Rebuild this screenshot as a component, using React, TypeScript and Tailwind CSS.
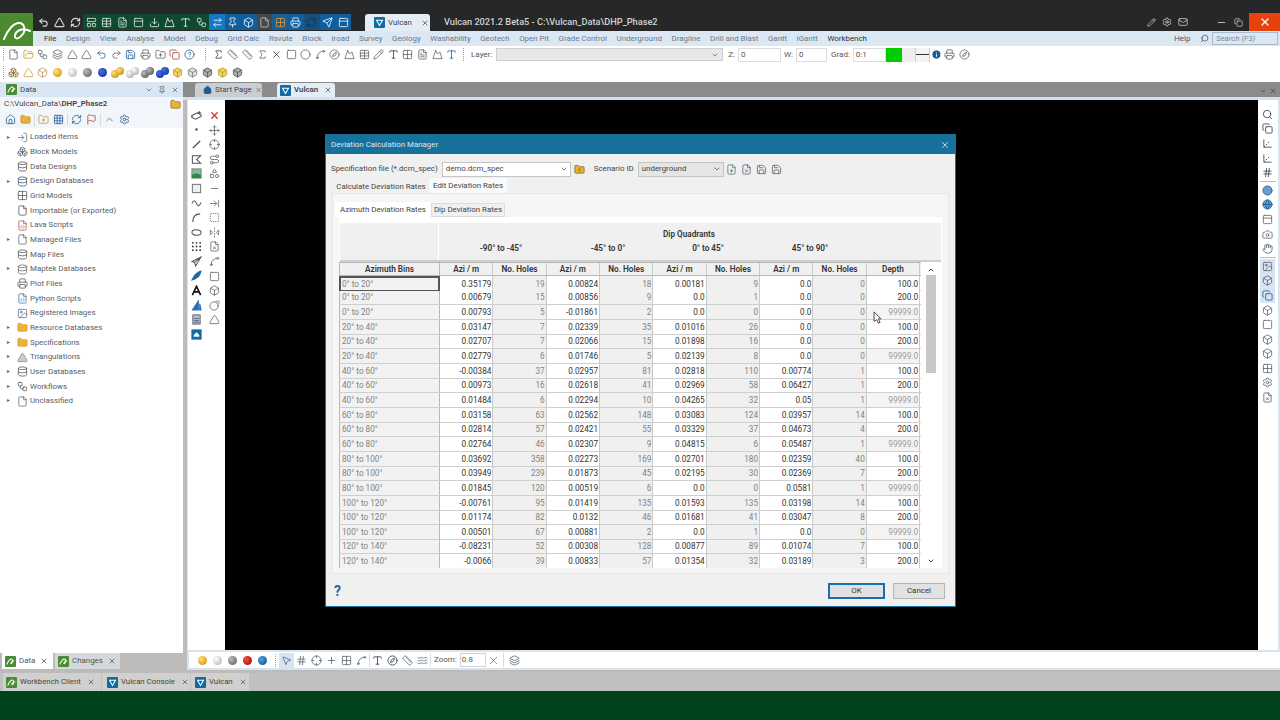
import type { ReactNode } from "react";
import {
  ArrowRightLeft, ArrowRightToLine, Axis3d, Bomb, Box, Boxes, Camera, ChevronDown, ChevronUp, Circle, CircleHelp, Compass, Copy,
  Crosshair, Database, Download, File, FileCode, FilePlus, FileText, FileX, Flag, FlipHorizontal2, Folder, FolderOpen,
  FolderPlus, FolderUp, Globe, Grid2x2, Grid3x3, Hand, Hash, Home, Image, Info, Layers, LayoutPanelTop,
  LogIn, Mail, Minus, Mountain, MousePointer2, Move, PanelTop, Pencil, Pin, Plus, Printer, RefreshCw,
  Route, Ruler, Save, Search, Send, Settings, Shapes, Sigma, Spline, Square, SquareDashed, Table, Triangle, Type, Undo2, Redo2, Waves,
  Workflow, X,
} from "lucide-react";
import type { LucideIcon } from "lucide-react";

type Ic = [LucideIcon, string];

const grey = "text-[#5a5f66]";
const dark = "text-[#30343a]";
const navy = "text-[#1b5c96]";
const gold = "text-[#c9952a]";

function Cell({ icon, tone, w = "w-[15px]", size = 11, sw = 1.7 }: { icon: LucideIcon; tone: string; w?: string; size?: number; sw?: number }) {
  const Icon = icon;
  return (
    <span className={`flex h-[15px] shrink-0 items-center justify-center ${w}`}>
      <Icon size={size} strokeWidth={sw} className={tone} />
    </span>
  );
}

function Ball({ tone }: { tone: string }) {
  return (
    <span className="flex h-[15px] w-[15px] shrink-0 items-center justify-center">
      <span className={`h-[9px] w-[9px] rounded-full ${tone}`} />
    </span>
  );
}

function Balls({ tone }: { tone: string }) {
  return (
    <span className="flex h-[15px] w-[15px] shrink-0 items-center justify-center">
      <span className={`mt-[3px] h-[8px] w-[8px] rounded-full ${tone}`} />
      <span className={`-ml-[3px] mb-[3px] h-[8px] w-[8px] rounded-full ${tone}`} />
    </span>
  );
}

function Grip() {
  return <span className="mx-[2px] h-[13px] w-px shrink-0 border-l border-dotted border-[#9aa0a6]" />;
}

function Mark() {
  return (
    <span className="flex h-[11px] w-[11px] shrink-0 items-center justify-center rounded-[1px] bg-[#4a8c35]">
      <svg viewBox="0 0 12 12" className="h-[9px] w-[9px]" fill="none" stroke="#fff" strokeWidth="1.4">
        <path d="M1 10C3 5 6 2 8 3c2 1 0 6-1 6S6 6 11 5" />
      </svg>
    </span>
  );
}

function VulcanMark() {
  return (
    <span className="flex h-[11px] w-[11px] shrink-0 items-center justify-center rounded-[1px] bg-[#0f6aa5]">
      <svg viewBox="0 0 12 12" className="h-[9px] w-[9px]" fill="none" stroke="#fff" strokeWidth="1.4">
        <path d="M2 3h8L6 10z" />
      </svg>
    </span>
  );
}

// little drawn tools for the vertical digitise toolbar
function Draw({ children }: { children: ReactNode }) {
  return (
    <span className="flex h-[14.6px] w-[17px] shrink-0 items-center justify-center">
      <svg viewBox="0 0 12 12" className="h-[11px] w-[11px]" fill="none" stroke="#4e5359" strokeWidth="1.1">
        {children}
      </svg>
    </span>
  );
}

const leftCol: ReactNode[] = [
  <><path d="M1 6l6-3 4 2v2l-6 3-4-2z" /><path d="M1 6v2M9 1v4M7 3h4" /></>,
  <circle cx="6" cy="6" r="0.8" fill="#333" />,
  <path d="M2 10L10 2" strokeWidth="1.3" stroke="#333" />,
  <path d="M1.5 2h9L6 6l4.5 4h-9z" />,
  <><rect x="1" y="1" width="10" height="10" fill="#8fb5a0" stroke="#6a8a7a" /><path d="M1 8c3-3 6-3 10 0v3H1z" fill="#2f8a4a" stroke="none" /></>,
  <rect x="1.5" y="1.5" width="9" height="9" fill="#eee" stroke="#777" />,
  <path d="M1 7c2-4 3-4 5 0s3 3 5-1" />,
  <path d="M2 11C2 5 5 2 10 2" strokeWidth="1.3" />,
  <ellipse cx="6" cy="6" rx="5" ry="3" />,
  <g fill="#333" stroke="none"><circle cx="2" cy="2" r="1" /><circle cx="6" cy="2" r="1" /><circle cx="10" cy="2" r="1" /><circle cx="2" cy="6" r="1" /><circle cx="6" cy="6" r="1" /><circle cx="10" cy="6" r="1" /><circle cx="2" cy="10" r="1" /><circle cx="6" cy="10" r="1" /><circle cx="10" cy="10" r="1" /></g>,
  <path d="M11 1L1 6l3 1 1 4z M4 7l7-6" />,
  <path d="M1 11C3 6 7 2 11 1 10 6 6 10 1 11z" fill="#1b6aa5" stroke="#1b6aa5" />,
  <path d="M1.500 11L6 1.500 10.500 11M3.500 7.500h5" stroke="#111" strokeWidth="1.8" />,
  <path d="M8 1v10H1.500zM9.500 4v7h1.500z" fill="#2a6fb0" stroke="#2a6fb0" />,
  <><rect x="2" y="1" width="8" height="10" fill="#a9c8b8" stroke="#668" /><path d="M3.500 5h5M3.500 7h5M3.500 9h5" stroke="#668" /></>,
  <><rect x="1" y="1" width="10" height="10" fill="#0f6aa5" stroke="#0f6aa5" /><path d="M3 6.500L6 3.500l3 3v2H3z" fill="#fff" stroke="none" /></>,
];

const titleIcons: [LucideIcon, string, string][] = [
  [Undo2, "text-[#d5d5d5]", "bg-transparent"],
  [Triangle, "text-[#d5d5d5]", "bg-transparent"],
  [RefreshCw, "text-[#d5d5d5]", "bg-transparent"],
  [LayoutPanelTop, "text-[#e3efe8]", "bg-[#0f4a2e]"],
  [Table, "text-[#e3efe8]", "bg-[#0f4a2e]"],
  [FileText, "text-[#e3efe8]", "bg-[#0f4a2e]"],
  [PanelTop, "text-[#e3efe8]", "bg-[#0f4a2e]"],
  [Download, "text-[#ffffff]", "bg-[#0f4a2e]"],
  [Mountain, "text-[#ffffff]", "bg-[#0f4a2e]"],
  [Type, "text-[#ffffff]", "bg-[#0f4a2e]"],
  [Workflow, "text-[#e3efe8]", "bg-[#0f4a2e]"],
  [ArrowRightLeft, "text-[#ffffff]", "bg-[#1477c4]"],
  [Pin, "text-[#ffffff]", "bg-[#0f5f9e]"],
  [Box, "text-[#ffffff]", "bg-[#0f5f9e]"],
  [File, "text-[#c9c9c9]", "bg-[#45484b]"],
  [Grid2x2, "text-[#e0a040]", "bg-[#1a5f94]"],
  [Printer, "text-[#ffffff]", "bg-[#0f5f9e]"],
  [RefreshCw, "text-[#0f2f4a]", "bg-[#17507e]"],
  [Send, "text-[#ffffff]", "bg-[#0f5f9e]"],
  [PanelTop, "text-[#ffffff]", "bg-[#0f5f9e]"],
];

const menus = ["File", "Design", "View", "Analyse", "Model", "Debug", "Grid Calc", "Rsvute", "Block", "Iroad", "Survey", "Geology", "Washability", "Geotech", "Open Pit", "Grade Control", "Underground", "Dragline", "Drill and Blast", "Gantt", "iGantt", "Workbench"];

function TopBars() {
  return (
    <div className="flex h-[46px] shrink-0 bg-[#252728]">
      <div className="flex w-[33px] shrink-0 flex-col justify-end">
        <div className="flex h-[33px] items-center justify-center bg-[#4c8a2f]">
          <svg viewBox="0 0 33 33" className="h-[33px] w-[33px]" fill="none" stroke="#fff" strokeWidth="2" strokeLinecap="round">
            <path d="M4 26C8 16 14 10 19 10c6 0 7 8 3 12-4 5-8 4-7 0 1-4 7-8 15-4" />
          </svg>
        </div>
      </div>
      <div className="flex min-w-0 flex-1 flex-col">
        <div className="flex h-[31px] items-end">
          <div className="flex h-[18px] items-center pl-[3px]">
            {titleIcons.map(([icon, tone, bg], i) => (
              <span key={i} className={`flex h-[16px] w-[15.75px] items-center justify-center ${bg}`}>
                <Cell icon={icon} tone={tone} w="w-[13px]" sw={i < 3 ? 2.4 : 1.7} />
              </span>
            ))}
          </div>
          <div className="ml-[14px] flex h-[17px] w-[65px] items-center gap-[3px] rounded-t-[3px] bg-[#e4edf5] pl-[9px] text-[7.9px] text-[#3a4048]">
            <VulcanMark />
            <span>Vulcan</span>
            <X size={8} strokeWidth={3} className="ml-[6px] text-[#777]" />
          </div>
          <div className="ml-[14px] flex h-[18px] items-center text-[9.2px] font-medium text-[#d2d4d6]">
            Vulcan 2021.2 Beta5 - C:\Vulcan_Data\DHP_Phase2
          </div>
          <div className="ml-auto flex h-[18px] items-center text-[#c8c8c8]">
            <Pencil size={9} className="mr-[6px]" />
            <Settings size={10} className="mr-[6px]" />
            <Mail size={10} className="mr-[28px]" />
            <Minus size={11} className="mr-[7px]" />
            <Copy size={9} className="mr-[6px]" />
            <span className="flex h-[18px] w-[31px] items-center justify-center bg-[#e8420c]">
              <X size={12} strokeWidth={2.4} className="text-white" />
            </span>
          </div>
        </div>
        <div className="flex h-[15px] items-center gap-[9.6px] bg-[#dbe7f3] pl-[11px] text-[7.9px] text-[#6b7886]">
          {menus.map((m) => (
            <span key={m} className={m === "File" || m === "Workbench" ? "text-[#2b2f33]" : ""}>{m}</span>
          ))}
          <span className="ml-auto text-[#4b5560]">Help</span>
          <div className="flex items-center gap-[3px] pr-[2px]">
            <Search size={9} className="-scale-x-100 text-[#4b5560]" />
            <span className="flex h-[13px] w-[66px] items-center border border-[#a9bccf] pl-[3px] text-[7.9px] italic text-[#7c8894]">Search (F3)</span>
          </div>
        </div>
      </div>
    </div>
  );
}

const row1a: Ic[] = [
  [File, grey], [FolderOpen, gold], [Workflow, grey], [Layers, grey], [Triangle, grey], [Triangle, grey],
  [Undo2, navy], [Redo2, grey], [Save, navy], [Printer, grey], [FolderPlus, grey], [Copy, "text-[#a8433a]"], [CircleHelp, navy],
];
const row1b: Ic[] = [
  [Sigma, dark], [Ruler, grey], [Ruler, grey], [Sigma, grey], [X, dark], [Square, grey], [Circle, grey], [Spline, grey],
  [Compass, grey], [Mountain, grey], [Table, grey], [Pencil, grey], [Type, dark], [Grid2x2, grey], [FileText, grey], [Mountain, grey], [Type, navy],
];

function ToolBars() {
  return (
    <div className="h-[36px] shrink-0 bg-white">
      <div className="flex h-[17px] items-center pl-[1px] text-[8px] text-[#555]">
        <Grip />
        {row1a.map(([icon, tone], i) => <Cell key={i} icon={icon} tone={tone} w="w-[14.7px]" />)}
        <span className="ml-[8px] mr-[5px] h-[13px] w-px border-l border-dotted border-[#9aa0a6]" />
        {row1b.map(([icon, tone], i) => <Cell key={i} icon={icon} tone={tone} w="w-[14.6px]" />)}
        <span className="ml-[4px] h-[13px] w-px border-l border-dotted border-[#9aa0a6]" />
        <span className="ml-[7px]">Layer:</span>
        <span className="ml-[4px] flex h-[13px] w-[227px] items-center justify-end border border-[#cfcfcf] bg-[#e7e7e7] pr-[3px]">
          <ChevronDown size={8} />
        </span>
        <span className="ml-[5px]">Z:</span>
        <span className="ml-[3px] flex h-[14px] w-[43px] items-center border border-[#dcdcdc] pl-[2px]">0</span>
        <span className="ml-[3px]">W:</span>
        <span className="ml-[3px] flex h-[14px] w-[31px] items-center border border-[#dcdcdc] pl-[2px]">0</span>
        <span className="ml-[4px]">Grad:</span>
        <span className="ml-[3px] flex h-[14px] w-[33px] items-center border border-[#dcdcdc] pl-[2px]">0:1</span>
        <span className="h-[14px] w-[16px] bg-[#00cc00]" />
        <span className="h-[14px] w-[13px] bg-[#eeeeee]" />
        <span className="flex h-[14px] w-[15px] items-center border-x border-[#cfcfcf] bg-[#f3f3f3]">
          <span className="h-px w-full bg-[#333]" />
        </span>
        <Info size={11} className="ml-[1px] fill-[#1b5c96] text-white" />
        <Cell icon={Printer} tone={grey} />
        <Cell icon={Compass} tone={grey} />
      </div>
      <div className="flex h-[18px] items-center pl-[1px]">
        <Grip />
        <Cell icon={Boxes} tone="text-[#8a6a2a]" w="w-[14.7px]" />
        <Cell icon={Triangle} tone="text-[#c9a52a]" w="w-[14.7px]" />
        <Cell icon={Box} tone="text-[#b89a55]" w="w-[14.7px]" />
        <Ball tone="bg-[radial-gradient(circle_at_35%_35%,#ffe27a,#c98a00)]" />
        <Ball tone="bg-[radial-gradient(circle_at_35%_35%,#ffffff,#aaaaaa)]" />
        <Ball tone="bg-[radial-gradient(circle_at_35%_35%,#bbbbbb,#555555)]" />
        <Ball tone="bg-[radial-gradient(circle_at_35%_35%,#4a6fe0,#0a2a90)]" />
        <Balls tone="bg-[radial-gradient(circle_at_35%_35%,#ffe27a,#b98000)]" />
        <Balls tone="bg-[radial-gradient(circle_at_35%_35%,#ffffff,#999999)]" />
        <Balls tone="bg-[radial-gradient(circle_at_35%_35%,#bbbbbb,#444444)]" />
        <Balls tone="bg-[radial-gradient(circle_at_35%_35%,#4a6fe0,#0a2a90)]" />
        <Cell icon={Box} tone="text-[#b89a20] fill-[#f0d060]" />
        <Cell icon={Box} tone="text-[#777] fill-[#ddd]" />
        <Cell icon={Box} tone="text-[#555] fill-[#aaa]" />
        <Cell icon={Box} tone="text-[#b89a20] fill-[#f0d060]" />
        <Cell icon={Box} tone="text-[#555] fill-[#aaa]" />
      </div>
    </div>
  );
}

const tree: [LucideIcon, string, string, boolean][] = [
  [LogIn, "text-[#4d7f8f]", "Loaded Items", true],
  [Boxes, "text-[#5d6b78]", "Block Models", false],
  [Database, "text-[#555]", "Data Designs", false],
  [Database, "text-[#3f5a6f]", "Design Databases", true],
  [Grid2x2, "text-[#555]", "Grid Models", false],
  [File, "text-[#555]", "Importable (or Exported)", false],
  [FileCode, "text-[#a35d4f]", "Lava Scripts", false],
  [File, "text-[#666]", "Managed Files", true],
  [Database, "text-[#555]", "Map Files", false],
  [Database, "text-[#666]", "Maptek Databases", true],
  [Printer, "text-[#555]", "Plot Files", false],
  [FileCode, "text-[#3f77a8]", "Python Scripts", false],
  [Image, "text-[#56708a]", "Registered Images", false],
  [Folder, "text-[#d49a1e] fill-[#eab53a]", "Resource Databases", true],
  [Folder, "text-[#d49a1e] fill-[#eab53a]", "Specifications", true],
  [Triangle, "text-[#888] fill-[#ccc]", "Triangulations", true],
  [Database, "text-[#555]", "User Databases", true],
  [Workflow, "text-[#555]", "Workflows", true],
  [File, "text-[#666]", "Unclassified", true],
];

function DataPanel() {
  return (
    <div className="flex w-[183px] shrink-0 flex-col bg-white">
      <div className="flex h-[15px] items-center gap-[3px] bg-[#d8e5f2] pl-[6px] pr-[4px] text-[7.9px] text-[#3c4650]">
        <Mark />
        <span>Data</span>
        <ChevronDown size={8} className="ml-auto text-[#555]" />
        <Pin size={8} className="mx-[2px] text-[#555]" />
        <X size={8} className="text-[#555]" />
      </div>
      <div className="flex h-[14px] items-center justify-between bg-[#f2f6fa] pl-[4px] pr-[2px] text-[7.9px] text-[#444]">
        <span>C:\Vulcan_Data\<b className="font-semibold">DHP_Phase2</b></span>
        <Folder size={11} className="fill-[#e8b23a] text-[#a88020]" />
      </div>
      <div className="flex h-[17px] items-center bg-[#f2f6fa] pl-[3px]">
        <Cell icon={Home} tone={navy} />
        <Cell icon={Folder} tone="text-[#c9952a] fill-[#e8b23a]" />
        <span className="ml-[1px] h-[12px] w-px bg-[#d5d9dd]" />
        <span className="ml-[1px] flex">
          <Cell icon={FolderPlus} tone="text-[#c9952a]" />
          <Cell icon={Grid3x3} tone={navy} />
        </span>
        <span className="ml-[1px] h-[12px] w-px bg-[#d5d9dd]" />
        <span className="ml-[1px] flex">
          <Cell icon={RefreshCw} tone={navy} />
          <Cell icon={Flag} tone="text-[#a8433a]" />
        </span>
        <span className="ml-[1px] h-[12px] w-px bg-[#d5d9dd]" />
        <span className="ml-[1px] flex">
          <Cell icon={ChevronUp} tone={grey} />
          <Cell icon={Settings} tone={navy} />
        </span>
      </div>
      <div className="pt-[2px]">
        {tree.map(([icon, tone, name, arrow]) => (
          <div key={name} className="flex h-[14.67px] items-center text-[7.9px] text-[#566068]">
            <span className="w-[16px] pl-[6px] text-[5px] text-[#666]">{arrow ? "►" : ""}</span>
            <Cell icon={icon} tone={tone} w="w-[13px]" />
            <span className="ml-[1px]">{name}</span>
          </div>
        ))}
      </div>
    </div>
  );
}

const leftB: LucideIcon[] = [X, Move, Crosshair, Route, Shapes, Minus, ArrowRightToLine, SquareDashed, FlipHorizontal2, FileX, Spline, Square, Box, Bomb, Triangle];
const rightTop: LucideIcon[] = [Search, Copy, Axis3d, Axis3d, Hash];
const rightMid: LucideIcon[] = [Circle, Globe, PanelTop, Camera, Hand];
const rightLow: LucideIcon[] = [Image, Box, Copy, Box, Square, Box, Box, Grid2x2, Settings, FileX];

function Tabs() {
  return (
    <div className="flex h-[15px] items-end bg-[#8b8b8b] pl-[12px] text-[7.9px] text-[#3c4650]">
      <div className="flex h-[14px] w-[67px] items-center gap-[3px] rounded-t-[3px] bg-[#c9ced3] pl-[8px]">
        <Home size={10} className="fill-[#1b5c96] text-[#1b5c96]" />
        <span>Start Page</span>
        <X size={8} strokeWidth={3} className="text-[#777]" />
      </div>
      <div className="ml-[15px] flex h-[14px] w-[58px] items-center gap-[3px] rounded-t-[3px] bg-[#e4edf5] pl-[3px] font-semibold">
        <VulcanMark />
        <span>Vulcan</span>
        <X size={8} strokeWidth={3} className="ml-[3px] text-[#777]" />
      </div>
      <div className="ml-auto flex items-center gap-[2px] pb-[2px] pr-[3px] text-[#444]">
        <ChevronDown size={8} />
        <X size={8} />
      </div>
    </div>
  );
}

function BottomTool() {
  return (
    <div className="ml-[4px] flex h-[20px] items-center border-y-2 border-l-2 border-[#d6e4f0] bg-white pl-[6px] text-[8px] text-[#555]">
      <Ball tone="bg-[radial-gradient(circle_at_35%_35%,#ffe27a,#c98a00)]" />
      <Ball tone="bg-[radial-gradient(circle_at_35%_35%,#ffffff,#aaaaaa)]" />
      <Ball tone="bg-[radial-gradient(circle_at_35%_35%,#bbbbbb,#555555)]" />
      <Ball tone="bg-[radial-gradient(circle_at_35%_35%,#f05040,#a00000)]" />
      <Ball tone="bg-[radial-gradient(circle_at_35%_35%,#50a0e0,#0a4a90)]" />
      <span className="ml-[5px] mr-[3px] h-[13px] w-px border-l border-dotted border-[#9aa0a6]" />
      <span className="bg-[#d6e4f3]"><Cell icon={MousePointer2} tone="text-[#4a6a8a]" /></span>
      <Cell icon={Hash} tone={grey} />
      <Cell icon={Crosshair} tone={grey} />
      <Cell icon={Plus} tone={grey} />
      <Cell icon={Grid2x2} tone={grey} />
      <Cell icon={Spline} tone={grey} />
      <span className="h-[14px] w-px bg-[#ddd]" />
      <Cell icon={Type} tone={dark} />
      <Cell icon={Compass} tone={dark} />
      <Cell icon={Ruler} tone={grey} />
      <Cell icon={Waves} tone={grey} />
      <span className="h-[14px] w-px bg-[#ddd]" />
      <span className="ml-[3px]">Zoom:</span>
      <span className="ml-[3px] flex h-[14px] w-[26px] items-center border border-[#cfd3d8] pl-[1px]">0.8</span>
      <X size={13} strokeWidth={1.2} className="ml-[1px] text-[#555]" />
      <span className="mx-[3px] h-[14px] w-px bg-[#ddd]" />
      <Cell icon={Layers} tone={grey} />
    </div>
  );
}

type Row = [string, string, string, string, string, string, string, string, string, string];
const rows: Row[] = [
  ["0° to 20°", "0.35179", "19", "0.00824", "18", "0.00181", "9", "0.0", "0", "100.0"],
  ["0° to 20°", "0.00679", "15", "0.00856", "9", "0.0", "1", "0.0", "0", "200.0"],
  ["0° to 20°", "0.00793", "5", "-0.01861", "2", "0.0", "0", "0.0", "0", "99999.0"],
  ["20° to 40°", "0.03147", "7", "0.02339", "35", "0.01016", "26", "0.0", "0", "100.0"],
  ["20° to 40°", "0.02707", "7", "0.02066", "15", "0.01898", "16", "0.0", "0", "200.0"],
  ["20° to 40°", "0.02779", "6", "0.01746", "5", "0.02139", "8", "0.0", "0", "99999.0"],
  ["40° to 60°", "-0.00384", "37", "0.02957", "81", "0.02818", "110", "0.00774", "1", "100.0"],
  ["40° to 60°", "0.00973", "16", "0.02618", "41", "0.02969", "58", "0.06427", "1", "200.0"],
  ["40° to 60°", "0.01484", "6", "0.02294", "10", "0.04265", "32", "0.05", "1", "99999.0"],
  ["60° to 80°", "0.03158", "63", "0.02562", "148", "0.03083", "124", "0.03957", "14", "100.0"],
  ["60° to 80°", "0.02814", "57", "0.02421", "55", "0.03329", "37", "0.04673", "4", "200.0"],
  ["60° to 80°", "0.02764", "46", "0.02307", "9", "0.04815", "6", "0.05487", "1", "99999.0"],
  ["80° to 100°", "0.03692", "358", "0.02273", "169", "0.02701", "180", "0.02359", "40", "100.0"],
  ["80° to 100°", "0.03949", "239", "0.01873", "45", "0.02195", "30", "0.02369", "7", "200.0"],
  ["80° to 100°", "0.01845", "120", "0.00519", "6", "0.0", "0", "0.0581", "1", "99999.0"],
  ["100° to 120°", "-0.00761", "95", "0.01419", "135", "0.01593", "135", "0.03198", "14", "100.0"],
  ["100° to 120°", "0.01174", "82", "0.0132", "46", "0.01681", "41", "0.03047", "8", "200.0"],
  ["100° to 120°", "0.00501", "67", "0.00881", "2", "0.0", "1", "0.0", "0", "99999.0"],
  ["120° to 140°", "-0.08231", "52", "0.00308", "128", "0.00877", "89", "0.01074", "7", "100.0"],
  ["120° to 140°", "-0.0066", "39", "0.00833", "57", "0.01354", "32", "0.03189", "3", "200.0"],
];

const heads = ["Azi / m", "No. Holes", "Azi / m", "No. Holes", "Azi / m", "No. Holes", "Azi / m", "No. Holes", "Depth"];

function Dqm({ children, cls }: { children: ReactNode; cls: string }) {
  return <div className={`flex h-full items-center justify-end border-r border-[#c9c9c9] pr-[1px] ${cls}`}>{children}</div>;
}

function DevTable() {
  return (
    <div className="flex h-[351px] flex-col overflow-hidden border-t border-white bg-white text-[8.2px]">
      <div className="mx-[1px] mt-[5px] flex h-[39px] shrink-0 border-b-2 border-[#cfcfcf] bg-[#f0f0f0] font-semibold text-[#333]">
        <div className="w-[99px] border-r border-white" />
        <div className="flex flex-1 flex-col items-center pt-[5px]">
          <span className="-ml-[2px]">Dip Quadrants</span>
          <div className="mt-[2px] flex w-full text-center">
            <span className="w-[124px]">-90° to -45°</span>
            <span className="w-[90px]">-45° to 0°</span>
            <span className="w-[110px]">0° to 45°</span>
            <span className="w-[94px]">45° to 90°</span>
          </div>
        </div>
      </div>
      <div className="flex min-h-0 flex-1">
        <div className="w-[582px] shrink-0 overflow-hidden">
          <div className="grid h-[14px] grid-cols-[101px_repeat(9,53.35px)] border-y border-[#b9b9b9] bg-[#f0f0f0] font-semibold text-[#333]">
            <div className="flex items-center justify-center border-x border-[#b9b9b9]">Azimuth Bins</div>
            {heads.map((h, i) => (
              <div key={i} className="flex items-center justify-center border-r border-[#c9c9c9]">{h}</div>
            ))}
          </div>
          {rows.map((r, i) => (
            <div key={i} className="grid h-[14.67px] grid-cols-[101px_repeat(9,53.35px)] border-b border-[#cfcfcf] text-[#828282]">
              <div className={`flex h-full items-center bg-[#f2f2f2] ${i === 0 ? "border-2 border-[#555] pl-[1px]" : "border-x border-[#b9b9b9] pl-[2px]"}`}>{r[0]}</div>
              {r.slice(1, 9).map((v, j) => (
                <Dqm key={j} cls={j % 2 === 0 ? "bg-white text-[#333]" : "bg-[#f0f0f0]"}>{v}</Dqm>
              ))}
              <Dqm cls={r[9] === "99999.0" ? "bg-[#f4f4f4] text-[#9a9a9a]" : "bg-white text-[#333]"}>{r[9]}</Dqm>
            </div>
          ))}
        </div>
        <div className="ml-[3px] flex w-[13px] flex-col items-center text-[#444]">
          <ChevronUp size={8} strokeWidth={3} className="mt-[4px]" />
          <span className="mt-[1px] h-[98px] w-[10px] bg-[#c8c8c8]" />
          <ChevronDown size={8} strokeWidth={3} className="mt-auto mb-[3px]" />
        </div>
      </div>
    </div>
  );
}

function Dialog() {
  return (
    <div className="absolute left-[325px] top-[134px] flex h-[473px] w-[631px] flex-col border border-[#1a6f96] bg-[#f0f0f0] text-[7.9px] text-[#444]">
      <div className="flex h-[19px] shrink-0 items-center justify-between bg-[#18719b] pl-[5px] pr-[5px] text-[#dce8ef]">
        <span>Deviation Calculation Manager</span>
        <X size={10} />
      </div>
      <div className="flex h-[24px] shrink-0 items-center pl-[5px] pt-[6px]">
        <span>Specification file (*.dcm_spec)</span>
        <div className="ml-[4px] flex h-[15px] w-[129px] items-center justify-between border border-[#c4c4c4] bg-white pl-[3px] pr-[2px]">
          <span>demo.dcm_spec</span>
          <ChevronDown size={8} />
        </div>
        <FolderUp size={11} className="ml-[3px] fill-[#e8b23a] text-[#8a7030]" />
        <span className="ml-[9px]">Scenario ID</span>
        <div className="ml-[4px] flex h-[15px] w-[86px] items-center justify-between border border-[#c4c4c4] bg-[#e5e5e5] pl-[3px] pr-[2px]">
          <span>underground</span>
          <ChevronDown size={8} />
        </div>
        <span className="flex">
          <Cell icon={FilePlus} tone="text-[#4a7f6a]" />
          <Cell icon={FileX} tone="text-[#555f75]" />
          <Cell icon={Save} tone={grey} />
          <Cell icon={Save} tone={grey} />
        </span>
      </div>
      <div className="flex h-[15px] shrink-0 items-end pl-[7px]">
        <span className="flex h-[13px] w-[96px] items-center justify-center bg-[#f0f0f0]">Calculate Deviation Rates</span>
        <span className="flex h-[15px] w-[78px] items-center justify-center bg-[#fafafa]">Edit Deviation Rates</span>
      </div>
      <div className="mx-[6px] min-h-0 flex-1 border border-[#e6e6e6] bg-[#f6f6f6] px-[6px] pt-[8px]">
        <div className="-ml-[4px] flex h-[15px] items-end">
          <span className="flex h-[15px] w-[96px] items-center justify-center bg-white">Azimuth Deviation Rates</span>
          <span className="flex h-[14px] w-[74px] items-center justify-center border border-[#dcdcdc] bg-[#f0f0f0]">Dip Deviation Rates</span>
        </div>
        <DevTable />
      </div>
      <div className="flex h-[32px] shrink-0 items-center pl-[8px] pr-[10px] pt-[2px]">
        <span className="text-[14px] font-bold text-[#1b6aa5]">?</span>
        <button className="ml-auto h-[16px] w-[57px] border-2 border-[#1a6fa8] bg-[#e1e1e1] text-[7.9px] text-[#333]">OK</button>
        <button className="ml-[8px] h-[16px] w-[52px] border border-[#b5b5b5] bg-[#e1e1e1] text-[7.9px] text-[#333]">Cancel</button>
      </div>
    </div>
  );
}

export default function App() {
  return (
    <div className="relative flex h-[720px] w-[1280px] flex-col overflow-hidden whitespace-nowrap bg-[#bdbcba] font-['Roboto','Noto_Sans',sans-serif]">
      <TopBars />
      <ToolBars />
      <div className="flex h-[591px] shrink-0">
        <div className="flex w-[183px] shrink-0 flex-col">
          <div className="flex h-[571px] shrink-0"><DataPanel /></div>
          <div className="flex h-[16px] items-start pl-[2px] text-[7.9px] text-[#555]">
            <div className="flex h-[16px] w-[51px] items-center gap-[3px] bg-white pl-[3px]">
              <Mark /><span>Data</span><X size={8} strokeWidth={3} className="ml-[2px] text-[#777]" />
            </div>
            <div className="ml-[2px] flex h-[16px] w-[65px] items-center gap-[3px] bg-[#d4d8dc] pl-[3px]">
              <Mark /><span>Changes</span><X size={8} strokeWidth={3} className="ml-[2px] text-[#777]" />
            </div>
          </div>
        </div>
        <div className="flex min-w-0 flex-1 flex-col">
          <Tabs />
          <div className="h-[3px] shrink-0 bg-[#d3e1ee]" />
          <div className="flex h-[550px] shrink-0 pl-[4px]">
            <div className="flex w-[38px] shrink-0 flex-col items-start border-l border-[#d6e4f0] bg-white pt-[8px]">
              {leftCol.map((d, i) => {
                const b = leftB[i];
                return (
                  <div key={i} className="flex h-[14.6px]">
                    <Draw>{d}</Draw>
                    {b ? <Cell icon={b} tone={i === 0 ? "text-[#d83a20]" : grey} w="w-[18px]" sw={i === 0 ? 3 : 1.7} /> : null}
                  </div>
                );
              })}
            </div>
            <div className="min-w-0 flex-1 bg-black" />
            <div className="flex w-[22px] shrink-0 flex-col items-center border-r-2 border-[#d6e4f0] bg-white pr-[1px] pt-[7px]">
              {rightTop.map((icon, i) => <span key={i} className="flex h-[14.6px] items-center"><Cell icon={icon} tone={dark} /></span>)}
              <span className="my-[1px] h-px w-[16px] bg-[#bbb]" />
              {rightMid.map((icon, i) => <span key={i} className="flex h-[14.6px] items-center"><Cell icon={icon} tone={i < 2 ? `${navy} fill-[#6a9ccc]` : grey} /></span>)}
              <span className="my-[1px] h-px w-[16px] bg-[#bbb]" />
              {rightLow.map((icon, i) => <span key={i} className={`flex h-[14.6px] items-center ${i < 3 ? "bg-[#d6e4f3]" : ""}`}><Cell icon={icon} tone={i === 2 ? navy : grey} /></span>)}
            </div>
          </div>
          <BottomTool />
        </div>
      </div>
      <div className="flex h-[18px] shrink-0 items-end bg-[#c2c0be] pl-[3px] text-[7.8px] text-[#444]">
        <div className="flex h-[18px] w-[98px] items-center gap-[3px] bg-[#d0d0ce] pl-[3px]"><Mark /><span>Workbench Client</span><X size={8} strokeWidth={3} className="ml-[3px] text-[#777]" /></div>
        <div className="ml-[1px] flex h-[18px] w-[88px] items-center gap-[3px] bg-[#d0d0ce] pl-[5px]"><VulcanMark /><span>Vulcan Console</span><X size={8} strokeWidth={3} className="ml-[3px] text-[#777]" /></div>
        <div className="ml-[1px] flex h-[18px] w-[58px] items-center gap-[3px] bg-[#d0d0ce] pl-[4px]"><VulcanMark /><span>Vulcan</span><X size={8} strokeWidth={3} className="ml-[3px] text-[#777]" /></div>
      </div>
      <div className="min-h-0 flex-1 bg-[#00431c]" />
      <Dialog />
      <svg viewBox="0 0 10 15" className="absolute left-[873px] top-[311px] h-[13px] w-[9px]" fill="#fff" stroke="#333" strokeWidth="1">
        <path d="M1 1v11l3-2 2 4 2-1-2-4h3z" />
      </svg>
    </div>
  );
}
